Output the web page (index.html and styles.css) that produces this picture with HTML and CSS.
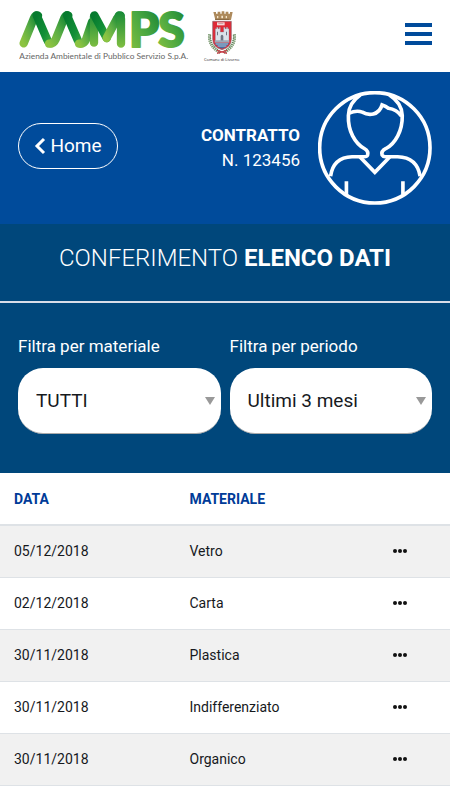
FILE: index.html
```html
<!DOCTYPE html>
<html lang="it">
<head>
<meta charset="utf-8">
<meta name="viewport" content="width=device-width, initial-scale=1">
<title>AAMPS - Elenco dati</title>
<link rel="stylesheet" href="styles.css">
</head>
<body>
<header class="topbar">
  <a class="brand" href="#" aria-label="AAMPS">
    <svg class="brand-mark" viewBox="27 0 510 186">
      <defs>
        <linearGradient id="rise" x1="0" y1="1" x2="1" y2="0"><stop offset="0" stop-color="#8cc341"/><stop offset=".45" stop-color="#5aad45"/><stop offset="1" stop-color="#06802f"/></linearGradient>
        <linearGradient id="fall" x1="0" y1="0" x2="1" y2="1"><stop offset="0" stop-color="#067a2e"/><stop offset=".6" stop-color="#128f37"/><stop offset="1" stop-color="#3da53f"/></linearGradient>
        <linearGradient id="stem" gradientUnits="userSpaceOnUse" x1="0" y1="33" x2="0" y2="143"><stop offset="0" stop-color="#168a37"/><stop offset="1" stop-color="#7fbe42"/></linearGradient>
        <linearGradient id="letter" x1="0" y1="1" x2="1" y2="0"><stop offset="0" stop-color="#8cc341"/><stop offset=".5" stop-color="#4aa841"/><stop offset="1" stop-color="#127f33"/></linearGradient>
      </defs>
      <g fill="none" stroke-width="25" stroke-linecap="round" stroke-linejoin="round">
        <path stroke="url(#rise)" d="M41 130 L72 54 Q77 44 84 47"/>
        <path stroke="url(#fall)" d="M80 46 L112 120 Q116 130 122 130"/>
        <path stroke="url(#rise)" d="M117 131 Q131 132 137 118 L163 54 Q168 43 175 47"/>
        <path stroke="url(#fall)" d="M171 46 L203 120 Q207 130 213 130"/>
        <path stroke="url(#rise)" d="M207 131 Q222 133 228 119 L246 66"/>
        <path stroke="url(#stem)" d="M252 50 V128"/>
        <path stroke="url(#fall)" d="M253 46 L290 114"/>
        <path stroke="url(#rise)" d="M290 114 L322 54 Q326 46 332 47"/>
        <path stroke="url(#stem)" d="M327 46 Q333 46 333 56 V131"/>
      </g>
      <g class="brand-letters" fill="url(#letter)" stroke="url(#letter)">
        <text x="357" y="140">P</text>
        <text x="445" y="140">S</text>
      </g>
      <text class="brand-tagline" x="28" y="178">Azienda Ambientale di Pubblico Servizio S.p.A.</text>
    </svg>
  </a>
  <div class="city">
    <svg class="city-crest" viewBox="0 0 96 138" aria-hidden="true">
      <path fill="#ad8a5c" d="M22 6h8v5h5V5h8v6h4V4h8v7h4V5h8v6h5V6h8l-5 24H28z"/>
      <path fill="#f3e5cb" d="M33 18h4v7h-4zM46 17h5v8h-5zM59 18h4v7h-4z"/>
      <path stroke="#6d5132" stroke-width="2" d="M27 28h43"/>
      <g fill="none" stroke="#79986f" stroke-width="9" stroke-dasharray="4 2">
        <path d="M11 73Q6 108 43 128"/><path d="M85 73Q90 108 53 128"/>
      </g>
      <g fill="none" stroke="#416f45" stroke-width="3" stroke-dasharray="3 4">
        <path d="M14 76Q11 105 42 123"/><path d="M82 76Q85 105 54 123"/>
      </g>
      <path d="M33 121l30 9M63 121l-30 9" stroke="#c6414a" stroke-width="4"/>
      <path fill="#df2936" stroke="#8c6972" stroke-width="2" d="M20 34h56v53q0 25-28 32Q20 112 20 87z"/>
      <path fill="#f6d7d7" d="M33 37h23v9H33z"/>
      <path fill="#b98b94" d="M37 40h15v2H37z"/>
      <path fill="#dae2ea" stroke="#75808e" stroke-width="1" d="M28 56h4v-4h4v4h4v-4h3v14h10V52h4v4h4v-4h4v4h4v37H28z"/>
      <path fill="#6d7685" d="M33 65h3v11h-3zM60 65h3v11h-3zM44 93V78q4-7 8 0v15z"/>
      <path fill="#9faab8" d="M26 91h44v7H26z"/>
      <path fill="#4670a2" d="M26 99h44q-7 12-22 17-15-5-22-17z"/>
      <path stroke="#e5edf5" stroke-width="2" d="M29 102h37M35 108h26"/>
    </svg>
    <span class="city-name">Comune di Livorno</span>
  </div>
  <button class="menu-button" type="button" aria-label="Menu"><span></span><span></span><span></span></button>
</header>

<section class="account">
  <a class="home-link" href="#">
    <svg class="home-chevron" viewBox="0 0 12 18" aria-hidden="true"><path d="M10 2 3 9l7 7"/></svg>
    Home
  </a>
  <div class="contract"><strong>CONTRATTO</strong><span>N. 123456</span></div>
  <svg class="avatar" viewBox="0 0 345 345" aria-hidden="true">
    <circle cx="172" cy="172" r="167"/>
    <path d="M128 12Q93 36 92 74C90 121 112 158 140 174Q154 182 150 194Q148 199 140 199H103Q46 201 38 258"/>
    <path d="M216 12Q254 36 255 74C256 121 234 158 206 174Q190 182 194 194Q197 199 204 199H241Q300 201 309 258"/>
    <path d="M94 67Q117 57 134 64C153 75 184 75 194 42Q205 46 213 52Q238 55 253 76"/>
    <path d="M127 200 172 246 217 200M86 273V313M257 273V313"/>
  </svg>
</section>

<main>
  <section class="panel">
    <h1 class="panel-title">CONFERIMENTO <strong>ELENCO DATI</strong></h1>
    <form class="filters">
      <div class="filter">
        <label for="material">Filtra per materiale</label>
        <div class="select-box">
          <select id="material"><option>TUTTI</option><option>Vetro</option><option>Carta</option><option>Plastica</option><option>Indifferenziato</option><option>Organico</option></select>
        </div>
      </div>
      <div class="filter">
        <label for="period">Filtra per periodo</label>
        <div class="select-box">
          <select id="period"><option>Ultimi 3 mesi</option><option>Ultimi 6 mesi</option></select>
        </div>
      </div>
    </form>
  </section>

  <table class="records">
    <colgroup><col class="col-date"><col class="col-material"><col class="col-action"></colgroup>
    <thead><tr><th scope="col">DATA</th><th scope="col">MATERIALE</th><td></td></tr></thead>
    <tbody>
      <tr><td>05/12/2018</td><td>Vetro</td><td><button class="more" type="button" aria-label="Dettagli"><span></span><span></span><span></span></button></td></tr>
      <tr><td>02/12/2018</td><td>Carta</td><td><button class="more" type="button" aria-label="Dettagli"><span></span><span></span><span></span></button></td></tr>
      <tr><td>30/11/2018</td><td>Plastica</td><td><button class="more" type="button" aria-label="Dettagli"><span></span><span></span><span></span></button></td></tr>
      <tr><td>30/11/2018</td><td>Indifferenziato</td><td><button class="more" type="button" aria-label="Dettagli"><span></span><span></span><span></span></button></td></tr>
      <tr><td>30/11/2018</td><td>Organico</td><td><button class="more" type="button" aria-label="Dettagli"><span></span><span></span><span></span></button></td></tr>
    </tbody>
  </table>
</main>
</body>
</html>
```
FILE: styles.css
```css
* { box-sizing: border-box; }
body { margin: 0; background: #fff; color: #16191d; font-family: Roboto, "Liberation Sans", sans-serif; }
a { color: inherit; text-decoration: none; }
button { padding: 0; border: 0; background: none; cursor: pointer; }

.topbar { display: flex; align-items: flex-start; height: 72px; padding: 0 18px; }
.brand { margin-right: 15px; }
.brand-mark { display: block; width: 170px; height: 62px; margin-left: 1px; }
.brand-letters { font: 900 144px Lato, sans-serif; stroke-width: 6px; stroke-linejoin: round; }
.brand-tagline { fill: #666; font: 25px Lato, sans-serif; }
.city { display: flex; flex-direction: column; align-items: center; padding-top: 10px; }
.city-crest { width: 32px; height: 46px; }
.city-name { color: #222; font: 4px/8px "Open Sans", sans-serif; white-space: nowrap; }
.menu-button { display: flex; flex-direction: column; gap: 5px; margin: 23px 0 0 auto; }
.menu-button span { width: 27px; height: 4px; background: #004b9b; }

.account { display: flex; align-items: center; gap: 18px; min-height: 152px; padding: 0 18px; background: #004b9b; color: #fff; }
.home-link { display: flex; align-items: center; justify-content: center; gap: 4px; width: 100px; height: 46px; margin-bottom: 4px; border: 1px solid #fff; border-radius: 23px; font-size: 19px; line-height: 24px; }
.home-chevron { width: 12px; height: 18px; fill: none; stroke: #fff; stroke-width: 3; }
.contract { display: flex; flex-direction: column; margin-left: auto; font-size: 17px; line-height: 25px; text-align: right; }
.avatar { width: 114px; height: 114px; fill: none; stroke: #fff; stroke-width: 11; }

.panel { background: #00477b; color: #fff; }
.panel-title { margin: 0; padding: 18px 18px 27px; border-bottom: 2px solid #d9dde8; font-size: 24px; line-height: 32px; font-weight: 300; text-align: center; }
.panel-title strong { font-weight: 700; }
.filters { display: flex; gap: 9px; padding: 31px 18px 39px; }
.filter { flex: 1; min-width: 0; }
.filter label { display: block; margin-bottom: 10px; font-size: 17px; line-height: 24px; }
.select-box { position: relative; }
.select-box::after { content: ""; position: absolute; top: 29px; right: 6px; border: 5px solid transparent; border-top: 8px solid #999; border-bottom: 0; pointer-events: none; }
.select-box select { width: 100%; height: 66px; padding: 0 18px; appearance: none; border: 0; border-bottom: 1px solid #aaa; border-radius: 25px; background: #fff; color: #16191d; font: 19px Roboto, sans-serif; }

.records { width: 100%; border-collapse: collapse; table-layout: fixed; font-size: 14px; line-height: 20px; }
.col-date { width: 39%; }
.col-material { width: 43%; }
.records th, .records td { padding: 15px 14px 16px; text-align: left; }
.records thead th { padding: 16px 14px 15px; color: #003b98; font-weight: 700; }
.records thead tr { border-bottom: 2px solid #dee2e6; }
.records tbody tr { border-bottom: 1px solid #dee2e6; }
.records tbody tr:nth-child(odd) { background: #f1f1f1; }
.more { display: flex; gap: 1px; margin-left: 10px; }
.more span { width: 4px; height: 4px; border-radius: 50%; background: #111; }
```
